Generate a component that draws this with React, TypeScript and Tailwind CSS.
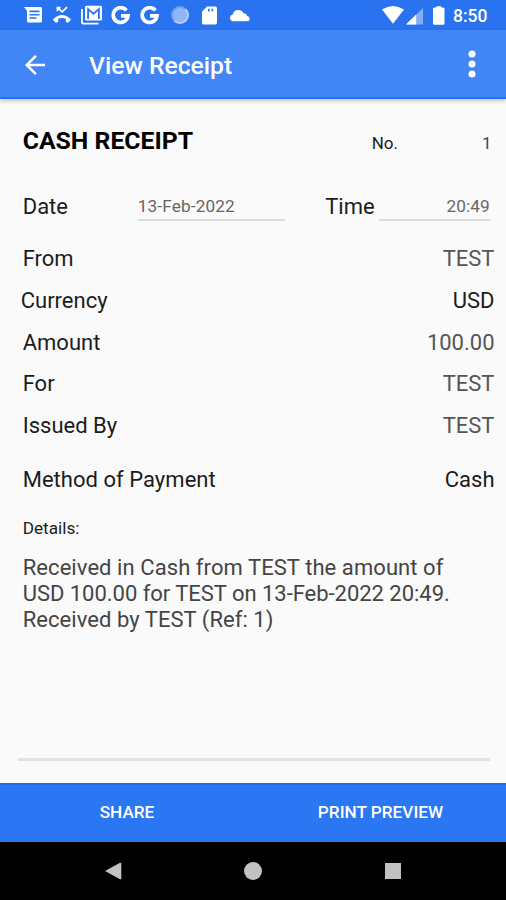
import { MdArrowBack } from "react-icons/md";

const details = [
  { label: "Currency", value: "USD", dark: true },
  { label: "Amount", value: "100.00", dark: false },
  { label: "For", value: "TEST", dark: false },
  { label: "Issued By", value: "TEST", dark: false },
];

function GoogleIcon() {
  return (
    <svg width="19" height="19" viewBox="0 0 19 19" fill="none" stroke="white" strokeWidth="3.7">
      <path d="M15.4 4.4 A7.4 7.4 0 1 0 17 9.9 H10" />
    </svg>
  );
}

function StatusBar() {
  return (
    <div className="flex h-[30px] items-center bg-[#2a73f0] pl-6 pr-[18px] text-white">
      <svg width="18" height="16" viewBox="0 0 18 16" fill="white">
        <path fillRule="evenodd" d="M0 0H16.5Q18 0 18 1.5V14Q18 15.5 16.5 15.5H4.5Q3 15.5 3 14V4ZM5.5 3.6V5.2H15.5V3.6ZM5.5 6.9V8.5H15.5V6.9ZM5.5 10.2V11.8H12.5V10.2Z" />
      </svg>
      <svg className="ml-[11px]" width="18" height="18" viewBox="0 0 18 18">
        <path d="M4.4 5.2V1.6H7.6M4.4 1.6L9.2 5.9L14 1.2" fill="none" stroke="white" strokeWidth="1.7" />
        <path d="M0.4 13.1Q9 5.1 17.6 13.1Q18.2 13.7 17.6 14.3L15.2 16.6Q14.7 17 14.1 16.6L12.8 15.8V12.6Q9 11.4 5.2 12.6V15.8L3.9 16.6Q3.3 17 2.8 16.6L0.4 14.3Q-0.2 13.7 0.4 13.1Z" fill="white" />
      </svg>
      <svg className="ml-[10px]" width="21" height="20" viewBox="0 0 21 20">
        <path d="M1 4V17Q1 18.7 2.7 18.7H17.5" fill="none" stroke="white" strokeWidth="1.8" />
        <rect x="4" y="0.8" width="17" height="14.8" rx="1.5" fill="white" />
        <path d="M7.1 14V4.1L12.5 8.7L17.9 4.1V14" fill="none" stroke="#2a73f0" strokeWidth="1.8" />
      </svg>
      <div className="ml-[9px] flex gap-[10px]">
        <GoogleIcon />
        <GoogleIcon />
      </div>
      <div className="ml-[12px] h-[18px] w-[18px] rounded-full border-2 border-[#6d9ff3] border-b-[#b7cffa] border-r-[#b7cffa] bg-[#90b5f8]" />
      <svg className="ml-[13px]" width="15" height="19" viewBox="0 0 15 19" fill="white">
        <path fillRule="evenodd" d="M5 0.5H13.3Q15 0.5 15 2.2V16.8Q15 18.5 13.3 18.5H1.7Q0 18.5 0 16.8V5.5ZM6 2.8V5.6H7.6V2.8ZM9.6 2.8V5.6H11.2V2.8Z" />
      </svg>
      <svg className="ml-[12px]" width="21" height="13" viewBox="0 0 21 13" fill="white">
        <path d="M3.4 12.2A3.4 3.4 0 0 1 3.7 5.6Q4.6 0.9 9.2 0.9Q13.2 0.9 14.8 4.6Q18 4.4 18.2 7.1Q20.6 7.5 20.6 9.7Q20.6 12.2 17.9 12.2Z" />
      </svg>
      <svg className="ml-auto" width="22" height="18" viewBox="0 0 22 18" fill="white">
        <path d="M0 3.6Q11 -3.6 22 3.6L11 17.8Z" />
      </svg>
      <svg className="ml-[2px] mt-[2px]" width="18" height="17" viewBox="0 0 18 17">
        <path d="M17 0V16.5H0Z" fill="#82adf7" />
        <path d="M10.2 6.6V16.5H0Z" fill="white" />
      </svg>
      <svg className="ml-[9px]" width="12" height="19" viewBox="0 0 12 19" fill="white">
        <path d="M3.4 0.3H8.2V1.5H10Q11.5 1.5 11.5 3V17.5Q11.5 18.7 10.3 18.7H1.2Q0 18.7 0 17.5V3Q0 1.5 1.5 1.5H3.4Z" />
      </svg>
      <span className="ml-2 w-[35px] whitespace-nowrap pt-0.5 text-[17.5px] font-medium leading-5">8:50</span>
    </div>
  );
}

function Toolbar() {
  return (
    <header className="relative flex h-[69px] items-center border-b-2 border-[#1f73e8] bg-[#4285f4] text-white shadow-[0_2px_4px_rgba(0,0,0,0.22)]">
      <MdArrowBack className="ml-[20px] mt-0.5" size={30} />
      <h1 className="ml-[39px] pt-1 text-[24.7px] font-medium leading-8">View Receipt</h1>
      <svg className="ml-auto mr-[30px] mt-px" width="8" height="28" viewBox="0 0 8 28" fill="white">
        <circle cx="4" cy="4" r="3.5" />
        <circle cx="4" cy="14" r="3.5" />
        <circle cx="4" cy="24" r="3.5" />
      </svg>
    </header>
  );
}

export default function App() {
  return (
    <div className="flex h-[900px] w-[506px] flex-col overflow-hidden bg-[#fafafa] font-[Roboto,sans-serif] text-[22px] leading-[26px] text-[#1c1c1c]">
      <StatusBar />
      <Toolbar />

      <main className="flex flex-1 flex-col pl-[22.7px] pr-[11.5px]">
        {/* Heading */}
        <div className="mt-[27px] flex items-baseline">
          <h2 className="text-[24.8px] font-bold leading-[30px] text-black">CASH RECEIPT</h2>
          <span className="ml-auto text-[17px]">No.</span>
          <span className="w-[96.5px] pr-[3px] text-right text-[17px] text-[#444]">1</span>
        </div>

        {/* Date and time */}
        <div className="mt-[37px] flex h-[28px] items-start">
          <span className="w-[115px] pt-px">Date</span>
          <span className="h-[28px] w-[147px] border-b-2 border-[#dcdcdc] text-[17.2px] leading-[26px] tracking-[0.15px] text-[#666]">13-Feb-2022</span>
          <span className="ml-[40.5px] w-[53.5px] pt-px">Time</span>
          <span className="h-[28px] w-[111px] border-b-2 border-[#dcdcdc] text-right text-[17.2px] leading-[26px] tracking-[0.1px] text-[#666]">20:49</span>
        </div>

        {/* Receipt fields */}
        <div className="mt-[25px] flex justify-between">
          <span>From</span>
          <span className="text-[#555]">TEST</span>
        </div>
        {details.map((row) => (
          <div key={row.label} className="mt-[15.8px] flex justify-between">
            <span className={row.label === "Currency" ? "-ml-0.5" : ""}>{row.label}</span>
            <span className={row.dark ? "text-[#1c1c1c]" : "text-[#555]"}>{row.value}</span>
          </div>
        ))}
        <div className="mt-7 flex justify-between">
          <span className="tracking-[0.03px]">Method of Payment</span>
          <span>Cash</span>
        </div>

        <p className="mt-[24.5px] text-[17.2px] leading-5">Details:</p>
        <p className="mt-[17px] whitespace-nowrap text-[#444]">
          <span className="tracking-[0.07px]">Received in Cash from TEST the amount of</span>
          <br />
          <span className="tracking-[-0.03px]">USD 100.00 for TEST on 13-Feb-2022 20:49.</span>
          <br />
          <span className="tracking-[0.05px]">Received by TEST (Ref: 1)</span>
        </p>
        <div className="-ml-[4.7px] mb-[22px] mr-[4.5px] mt-auto h-[3px] bg-[#e2e2e2]" />
      </main>

      <div className="grid h-[59px] grid-cols-2 border-t-2 border-[#1a6df0] bg-[#2a76f3] text-[17.2px] font-medium text-white">
        <button className="pb-[3px] pl-px">SHARE</button>
        <button className="pb-[3px] pl-0.5">PRINT PREVIEW</button>
      </div>

      <nav className="flex h-[58px] items-center bg-black pl-[105px] text-[#c2c2c2]">
        <svg width="17" height="18" viewBox="0 0 17 18" fill="currentColor">
          <path d="M0 9L15 0.8Q16.3 0.3 16.3 1.5V16.5Q16.3 17.7 15 17.2Z" />
        </svg>
        <div className="ml-[122px] h-[18px] w-[18px] rounded-full bg-[#c2c2c2]" />
        <div className="ml-[123px] h-4 w-4 bg-[#c2c2c2]" />
      </nav>
    </div>
  );
}
